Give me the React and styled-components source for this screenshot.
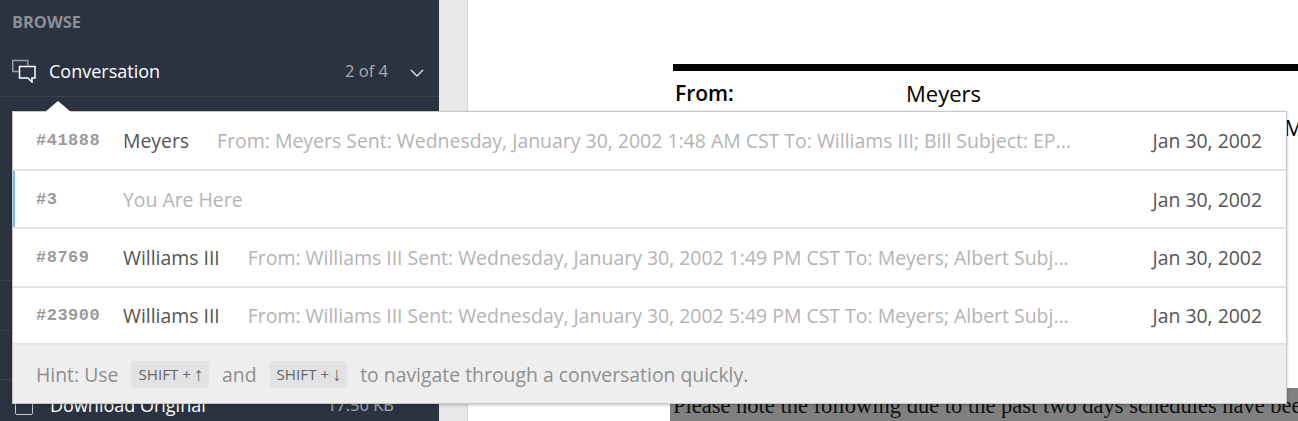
import React from "react";
import styled, { createGlobalStyle } from "styled-components";

const GlobalStyle = createGlobalStyle`
  html, body {
    margin: 0;
    padding: 0;
    height: 100%;
    overflow: hidden;
    background: #fff;
    font-family: "Open Sans", "Liberation Sans", sans-serif;
  }
`;

const Page = styled.div`
  position: relative;
  display: flex;
  width: 1298px;
  height: 421px;
  overflow: hidden;
`;

const Sidebar = styled.aside`
  width: 439px;
  flex: none;
  background: #2c3340;
  color: #fff;
`;

const SectionTitle = styled.div`
  height: 45px;
  padding: 11px 12px 0;
  box-sizing: border-box;
  font-size: 16.4px;
  line-height: 22px;
  font-weight: 700;
  color: #8b8f96;
`;

const NavRow = styled.div`
  display: flex;
  align-items: center;
  height: 52px;
  padding: 0 15px 0 12px;
  box-sizing: border-box;
  border-bottom: 1px solid #3a4250;
  font-size: 18px;
`;

const HiddenRows = styled.div`
  height: 133px;
`;

const SideRow = styled.div`
  height: ${(p) => p.$height}px;
  box-sizing: border-box;
  border-bottom: 1px solid #3a4250;
`;

const NavLabel = styled.span`
  flex: 1;
  margin-left: 13px;
`;

const NavCount = styled.span`
  color: #a8abb1;
  font-size: 16.5px;
  margin-right: 22px;
`;

const ChevronWrap = styled.span`
  display: flex;
  margin-top: 4px;
`;

const DownloadRow = styled.div`
  display: flex;
  align-items: center;
  height: 50px;
  padding: 0 45px 1px 15px;
  box-sizing: border-box;
  font-size: 18px;
`;

const CheckBox = styled.span`
  width: 18px;
  height: 18px;
  margin-top: 2px;
  border: 1.5px solid #c4c6ca;
  border-radius: 2px;
  box-sizing: border-box;
`;

const DownloadLabel = styled.span`
  flex: 1;
  margin-left: 17px;
`;

const DownloadSize = styled.span`
  color: #a8abb1;
  font-size: 16.5px;
`;

const Gutter = styled.div`
  width: 29px;
  flex: none;
  background: #e8e8e8;
  border-right: 1px solid #d8d8d8;
  box-sizing: border-box;
`;

const Doc = styled.main`
  flex: 1;
  min-width: 0;
  background: #fff;
  padding: 64px 0 0 205px;
  color: #000;
  overflow: hidden;
`;

const Rule = styled.div`
  height: 7px;
  background: #000;
`;

const DocLine = styled.div`
  display: flex;
  font-size: 22px;
  line-height: 27px;
  margin: ${(p) => p.$gap}px 0 0 2px;
  white-space: nowrap;
`;

const DocLabel = styled.b`
  flex: none;
  width: ${(p) => p.$width}px;
  font-size: 21px;
  font-weight: 600;
`;

const Highlight = styled.div`
  margin: 247px 0 0 -3px;
  height: 34px;
  padding: 6px 0 0 3px;
  box-sizing: border-box;
  background: #808080;
  white-space: nowrap;
  font-family: "Liberation Serif", serif;
  font-size: 22.5px;
  line-height: 24px;
  color: #111;
`;

const Popover = styled.div`
  position: absolute;
  left: 12px;
  top: 111px;
  width: 1275px;
  height: 293px;
  box-sizing: border-box;
  background: #fff;
  border: 1px solid #c8c8c8;
  box-shadow: 0 1px 3px rgba(0, 0, 0, 0.25);

  &::before {
    content: "";
    position: absolute;
    left: 32px;
    top: -11px;
    border-left: 13px solid transparent;
    border-right: 13px solid transparent;
    border-bottom: 11px solid #fff;
  }
`;

const ThreadRow = styled.div`
  display: flex;
  align-items: center;
  height: ${(p) => p.$height}px;
  box-sizing: border-box;
  padding: 0 24px 0 23px;
  border-bottom: 2px solid #e4e4e4;
  box-shadow: ${(p) => (p.$current ? "inset 2px 0 0 #74bcf5" : "none")};
  font-size: 19.4px;
  white-space: nowrap;
`;

const ThreadId = styled.span`
  width: 87px;
  flex: none;
  font-family: "Liberation Mono", monospace;
  font-weight: 700;
  font-size: 17px;
  letter-spacing: 0.5px;
  color: #9a9a9a;
`;

const ThreadName = styled.span`
  flex: none;
  color: ${(p) => (p.$muted ? "#b4b4b4" : "#555")};
  margin-right: 28px;
`;

const ThreadSnippet = styled.span`
  color: #b4b4b4;
  font-size: 19.46px;
`;

const ThreadDate = styled.span`
  flex: none;
  margin-left: auto;
  color: #555;
`;

const Hint = styled.div`
  display: flex;
  align-items: center;
  height: 58px;
  padding-left: 23px;
  background: #eee;
  font-size: 19.4px;
  color: #8e8e8e;
  white-space: nowrap;
`;

const Key = styled.span`
  display: inline-flex;
  align-items: center;
  gap: 3px;
  height: 27px;
  margin: 0 13px;
  padding: 0 5.500px 0 7px;
  background: #e1e2e4;
  border-radius: 4px;
  font-size: 15.2px;
  color: #666;
`;

const KeyArrow = styled.span`
  font-size: 19px;
  line-height: 1;
`;

const threads = [
  {
    id: "#41888",
    name: "Meyers",
    snippet:
      "From: Meyers Sent: Wednesday, January 30, 2002 1:48 AM CST To: Williams III; Bill Subject: EP...",
    height: 59,
  },
  { id: "#3", name: "You Are Here", current: true, height: 58 },
  {
    id: "#8769",
    name: "Williams III",
    snippet:
      "From: Williams III Sent: Wednesday, January 30, 2002 1:49 PM CST To: Meyers; Albert Subj...",
    height: 59,
  },
  {
    id: "#23900",
    name: "Williams III",
    snippet:
      "From: Williams III Sent: Wednesday, January 30, 2002 5:49 PM CST To: Meyers; Albert Subj...",
    height: 57,
  },
];

const ConversationIcon = () => (
  <svg width="24" height="24" viewBox="0 0 24 24" fill="none" strokeWidth="1.5">
    <path d="M7 12.500H.8V1.500h15V6.500" stroke="#9a9da3" />
    <path d="M7.500 7.500H23V19h-3v4l-4-4H7.500z" stroke="#fff" />
  </svg>
);

const Chevron = () => (
  <svg width="14" height="8" viewBox="0 0 14 8" fill="none" stroke="#d5d6d9" strokeWidth="1.5">
    <path d="M1 1l6 6 6-6" />
  </svg>
);

export default function App() {
  return (
    <Page>
      <GlobalStyle />
      <Sidebar>
        <SectionTitle>BROWSE</SectionTitle>
        <NavRow>
          <ConversationIcon />
          <NavLabel>Conversation</NavLabel>
          <NavCount>2 of 4</NavCount>
          <ChevronWrap>
            <Chevron />
          </ChevronWrap>
        </NavRow>
        <HiddenRows />
        <SideRow $height={51} />
        <SideRow $height={50} />
        <SideRow $height={49} />
        <DownloadRow>
          <CheckBox />
          <DownloadLabel>Download Original</DownloadLabel>
          <DownloadSize>17.50 KB</DownloadSize>
        </DownloadRow>
      </Sidebar>
      <Gutter />
      <Doc>
        <Rule />
        <DocLine $gap={9}>
          <DocLabel $width={231}>From:</DocLabel>
          Meyers
        </DocLine>
        <DocLine $gap={7}>
          <DocLabel $width={609}>Sent:</DocLabel>
          Meyers
        </DocLine>
        <Highlight>
          Please note the following due to the past two days schedules have been changed
        </Highlight>
      </Doc>
      <Popover>
        {threads.map((t) => (
          <ThreadRow key={t.id} $height={t.height} $current={t.current}>
            <ThreadId>{t.id}</ThreadId>
            <ThreadName $muted={t.current}>{t.name}</ThreadName>
            {t.snippet && <ThreadSnippet>{t.snippet}</ThreadSnippet>}
            <ThreadDate>Jan 30, 2002</ThreadDate>
          </ThreadRow>
        ))}
        <Hint>
          Hint: Use
          <Key>
            SHIFT + <KeyArrow>↑</KeyArrow>
          </Key>
          and
          <Key>
            SHIFT + <KeyArrow>↓</KeyArrow>
          </Key>
          to navigate through a conversation quickly.
        </Hint>
      </Popover>
    </Page>
  );
}
